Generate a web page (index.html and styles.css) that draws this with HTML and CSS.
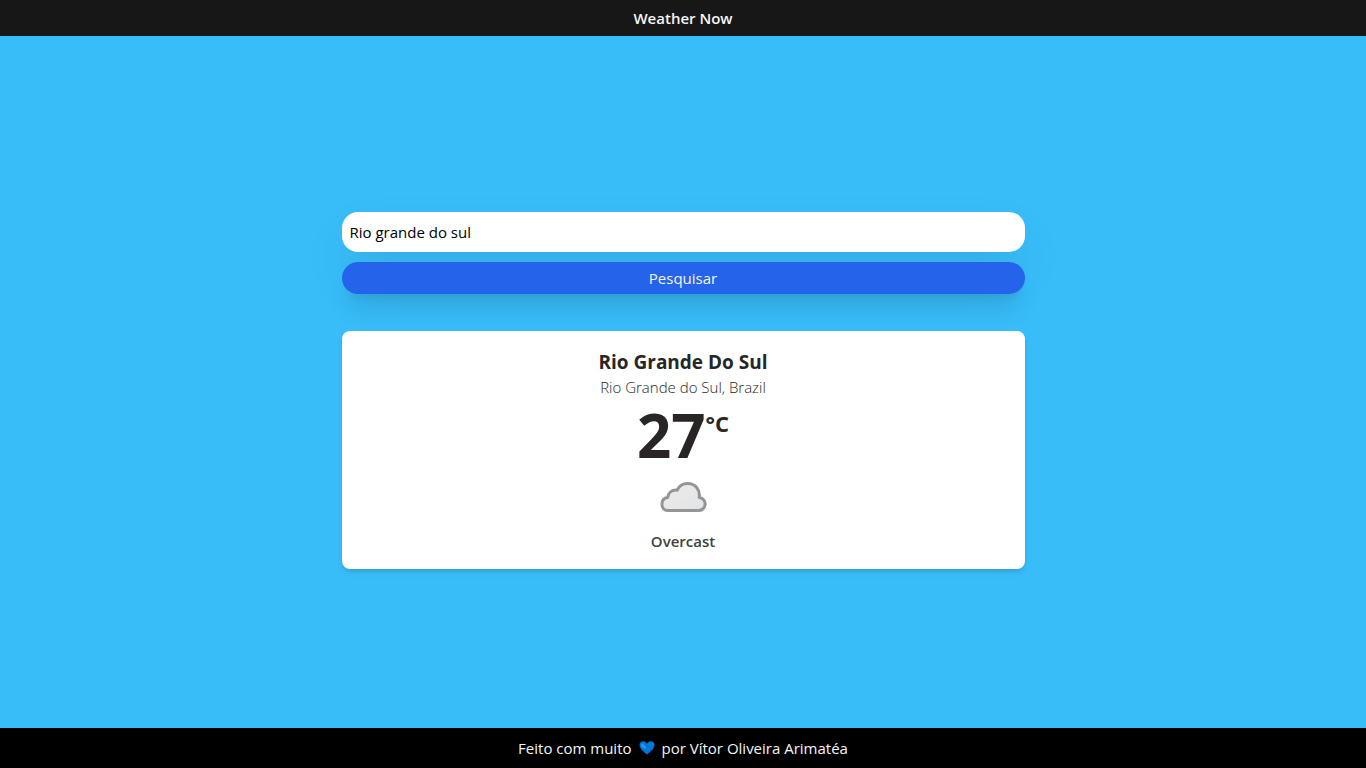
FILE: index.html
```html
<!DOCTYPE html>
<html lang="pt-BR">
<head>
<meta charset="utf-8">
<meta name="viewport" content="width=device-width, initial-scale=1">
<title>Weather Now</title>
<link rel="stylesheet" href="styles.css">
</head>
<body>
<header class="topbar"><h1 class="brand">Weather Now</h1></header>
<main class="content">
  <form class="search">
    <input class="search-input" type="text" aria-label="Cidade" value="Rio grande do sul">
    <button class="search-button" type="button">Pesquisar</button>
  </form>
  <section class="card">
    <h2 class="city">Rio Grande Do Sul</h2>
    <p class="region">Rio Grande do Sul, Brazil</p>
    <p class="temperature">27<span class="unit">°C</span></p>
    <svg class="cloud" viewBox="0 0 64 64" aria-hidden="true">
      <defs><linearGradient id="cloud-fill" x1="0" y1="0" x2="1" y2="1"><stop offset="0" stop-color="#ececed"/><stop offset="1" stop-color="#e2e3e4"/></linearGradient></defs>
      <path d="M25 45.500H47A6.500 6.500 0 0 0 48.200 32.500C49.500 24.500 44 18.500 36.700 18.500C32 18.500 28 21 26.200 25.200C20.500 24.500 17.500 28 16.700 32.500C12.800 33 10.900 36 10.900 39.300C10.900 42.800 13.200 45.500 16.700 45.500Z" fill="url(#cloud-fill)" stroke="#949596" stroke-width="3" stroke-linejoin="round"/>
    </svg>
    <p class="condition">Overcast</p>
  </section>
</main>
<footer class="footer">
  <span>Feito com muito</span>
  <svg class="heart" viewBox="0 0 16 16" role="img" aria-label="coração azul">
    <path d="M8 14.500C5 12 .5 8.500 .5 5C.5 2.700 2.200 1.300 4.200 1.300C6 1.300 7.300 2.300 8 3.800C8.700 2.300 10 1.300 11.800 1.300C13.800 1.300 15.500 2.700 15.500 5C15.500 8.500 11 12 8 14.500Z" fill="#0078d7"/>
    <path d="M2 4.500L3.500 3.500L7 7.500L6.500 9C4.500 8 2.500 6.500 2 4.500Z" fill="#3896e3"/>
  </svg>
  <span>por Vítor Oliveira Arimatéa</span>
</footer>
</body>
</html>
```
FILE: styles.css
```css
* { box-sizing: border-box; margin: 0; }
body {
  min-height: 100vh;
  display: flex;
  flex-direction: column;
  background: #38bdf8;
  font-family: "Open Sans", "Noto Sans", sans-serif;
  font-size: 15px;
  line-height: 24px;
}
.topbar { padding: 6px 16px; background: #171717; color: #f5f5f5; text-align: center; }
.brand { font-size: 15px; font-weight: 600; line-height: 24px; }
.content {
  flex: 1;
  display: flex;
  flex-direction: column;
  align-items: center;
  justify-content: center;
  gap: 37px;
  padding-top: 16px;
}
.search { width: 50%; display: flex; flex-direction: column; gap: 10px; }
.search-input, .search-button { width: 100%; border: 0; font: inherit; }
.search-input {
  height: 40px;
  padding: 8px;
  border-radius: 16px;
  background: #fff;
  color: #000;
  box-shadow: 0 25px 50px -12px rgb(0 0 0 / 25%);
}
.search-button {
  padding: 4px 8px;
  border-radius: 16px;
  background: #2563eb;
  color: #f5f5f5;
  box-shadow: 0 20px 25px -5px rgb(0 0 0 / 10%), 0 8px 10px -6px rgb(0 0 0 / 10%);
}
.card {
  position: relative;
  width: 50%;
  padding: 16px;
  display: flex;
  flex-direction: column;
  align-items: center;
  border-radius: 8px;
  background: #fff;
  box-shadow: 0 4px 6px -1px rgb(0 0 0 / 10%), 0 2px 4px -2px rgb(0 0 0 / 10%);
}
.city { color: #262626; font-size: 19px; font-weight: 700; line-height: 30px; }
.region { color: #262626; font-weight: 300; line-height: 20px; }
.temperature {
  display: flex;
  padding-top: 8px;
  color: #292524;
  font-size: 60px;
  font-weight: 700;
  line-height: 60px;
}
.unit { font-size: 22px; font-weight: 700; line-height: 36px; }
.cloud { width: 64px; height: 64px; }
.condition { color: #404040; font-weight: 600; }
.footer {
  display: flex;
  align-items: center;
  justify-content: center;
  gap: 7px;
  padding: 8px;
  background: #000;
  color: #f5f5f5;
}
.heart { width: 16px; height: 16px; }
```
